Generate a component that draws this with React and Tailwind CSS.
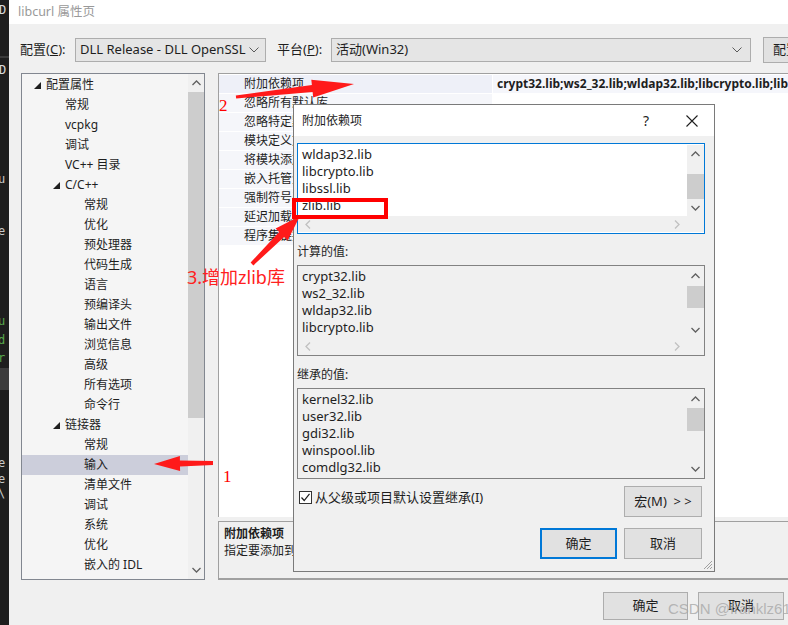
import React from 'react';

const F = "font-['Noto_Sans','Noto_Sans_CJK_SC',sans-serif]";

function Tri() {
  return (
    <svg width="7" height="7" viewBox="0 0 7 7">
      <polygon points="7,0 7,7 0,7" fill="#1e1e1e" />
    </svg>
  );
}

function Chev({ dir, color = '#606060' }) {
  const pts = {
    up: '0.5,5 4.5,1 8.5,5',
    down: '0.5,1 4.5,5 8.5,1',
    left: '5,0.5 1,4.5 5,8.5',
    right: '1,0.5 5,4.5 1,8.5',
  }[dir];
  const vert = dir === 'up' || dir === 'down';
  return (
    <svg width={vert ? 9 : 6} height={vert ? 6 : 9} viewBox={vert ? '0 0 9 6' : '0 0 6 9'}>
      <polyline points={pts} fill="none" stroke={color} strokeWidth="1.3" />
    </svg>
  );
}

function ComboChev() {
  return (
    <svg width="10" height="6" viewBox="0 0 10 6">
      <polyline points="0.5,0.5 5,5 9.5,0.5" fill="none" stroke="#5a5a5a" strokeWidth="1" />
    </svg>
  );
}

const tree = [
  ['配置属性', 0, true],
  ['常规', 1],
  ['vcpkg', 1],
  ['调试', 1],
  ['VC++ 目录', 1],
  ['C/C++', 1, true],
  ['常规', 2],
  ['优化', 2],
  ['预处理器', 2],
  ['代码生成', 2],
  ['语言', 2],
  ['预编译头', 2],
  ['输出文件', 2],
  ['浏览信息', 2],
  ['高级', 2],
  ['所有选项', 2],
  ['命令行', 2],
  ['链接器', 1, true],
  ['常规', 2],
  ['输入', 2, false, true],
  ['清单文件', 2],
  ['调试', 2],
  ['系统', 2],
  ['优化', 2],
  ['嵌入的 IDL', 2],
];

const indent = ['w-[12px]', 'w-[31px]', 'w-[50px]'];

const props = [
  '附加依赖项',
  '忽略所有默认库',
  '忽略特定默认库',
  '模块定义文件',
  '将模块添加到程序集',
  '嵌入托管资源文件',
  '强制符号引用',
  '延迟加载的 DLL',
  '程序集链接资源',
];

function VScroll({ thumbTop, thumbH, height }) {
  return (
    <div className="w-[17px] bg-[#f0f0f0] flex flex-col items-center shrink-0" style={{ height }}>
      <div className="h-[17px] flex items-center justify-center"><Chev dir="up" /></div>
      <div className="flex-1 w-full relative">
        <div className="absolute left-0 right-0 bg-[#cdcdcd]" style={{ top: thumbTop, height: thumbH }} />
      </div>
      <div className="h-[17px] flex items-center justify-center"><Chev dir="down" /></div>
    </div>
  );
}

function ListBox({ items, blue, white, hscroll, thumbTop, thumbH }) {
  const innerH = hscroll ? 72 : 89;
  return (
    <div className={`h-[91px] border ${blue ? 'border-[#0078d7]' : 'border-[#828282]'} ${white ? 'bg-white' : 'bg-[#f0f0f0]'} flex flex-col`}>
      <div className="flex">
        <div className="flex-1 pl-[4px] pt-[2px] overflow-hidden" style={{ height: innerH }}>
          {items.map((t, i) => (
            <div key={i} className="h-[17px] leading-[17px] text-[13px] text-[#1e1e1e] whitespace-nowrap">{t}</div>
          ))}
        </div>
        <div className={`${white ? 'bg-white' : 'bg-[#f0f0f0]'} pt-[1px]`}>
          <VScroll thumbTop={thumbTop} thumbH={thumbH} height={hscroll ? 71 : 87} />
        </div>
      </div>
      {hscroll && (
        <div className="flex h-[16px] bg-[#f0f0f0]">
          <div className="flex-1 flex items-center justify-between px-[7px]">
            <Chev dir="left" color="#c0c0c0" />
            <Chev dir="right" color="#c0c0c0" />
          </div>
          <div className="w-[17px] bg-[#f0f0f0]" />
        </div>
      )}
    </div>
  );
}

function arrowPoly(tx, ty, hx, hy, headLen, headW, tailW, neckW) {
  const dx = hx - tx, dy = hy - ty;
  const len = Math.hypot(dx, dy);
  const ux = dx / len, uy = dy / len;
  const nx = -uy, ny = ux;
  const bx = hx - ux * headLen, by = hy - uy * headLen;
  const p = (x, y) => `${x.toFixed(1)},${y.toFixed(1)}`;
  return [
    p(tx + nx * tailW / 2, ty + ny * tailW / 2),
    p(bx + nx * neckW / 2, by + ny * neckW / 2),
    p(bx + nx * headW / 2, by + ny * headW / 2),
    p(hx, hy),
    p(bx - nx * headW / 2, by - ny * headW / 2),
    p(bx - nx * neckW / 2, by - ny * neckW / 2),
    p(tx - nx * tailW / 2, ty - ny * tailW / 2),
  ].join(' ');
}

export default function App() {
  return (
    <div className={`relative w-[788px] h-[625px] overflow-hidden flex bg-[#f0f0f0] ${F}`}>
      {/* editor strip */}
      <div className="w-[9px] h-full bg-[#1e1e1e] overflow-hidden flex flex-col font-['DejaVu_Sans_Mono',monospace] text-[12px] leading-[14px] text-[#c8c8c8] shrink-0">
        <div className="mt-[3px] -ml-[1px] text-[#dcdcdc]">D</div>
        <div className="mt-[39px] h-[2px] bg-[#3a3a3a]" />
        <div className="mt-[5px] -ml-[1px] text-[#dcdcdc]">D</div>
        <div className="mt-[95px] -ml-[2px]">u</div>
        <div className="mt-[38px] -ml-[2px]">e</div>
        <div className="mt-[76px] -ml-[2px] text-[#57a64a]">u</div>
        <div className="mt-[5px] -ml-[2px] text-[#57a64a]">d</div>
        <div className="mt-[4px] -ml-[2px] text-[#57a64a]">r</div>
        <div className="mt-[3px] h-[22px] bg-[#3c3c3c]" />
        <div className="mt-[66px] -ml-[2px]">e</div>
        <div className="mt-[2px] -ml-[2px]">e</div>
        <div className="mt-[0px] -ml-[2px]">\</div>
      </div>

      {/* window */}
      <div className="flex-1 flex flex-col min-w-0 overflow-hidden">
        <div className="h-[24px] bg-white flex items-center pl-[9px] shrink-0">
          <span className="text-[12.5px] text-[#999999]">libcurl 属性页</span>
        </div>

        {/* config row */}
        <div className="mt-[14px] h-[24px] flex items-center text-[13px] text-[#1e1e1e] shrink-0">
          <span className="ml-[11px] w-[55px] shrink-0 whitespace-nowrap">配置(<u>C</u>):</span>
          <div className="w-[191px] h-[24px] border border-[#adadad] bg-[#e5e5e5] flex items-center pl-[4px] pr-[6px] shrink-0">
            <span className="flex-1 whitespace-nowrap">DLL Release - DLL OpenSSL</span>
            <ComboChev />
          </div>
          <span className="ml-[11px] w-[54px] shrink-0 whitespace-nowrap">平台(<u>P</u>):</span>
          <div className="w-[420px] h-[24px] border border-[#adadad] bg-[#e5e5e5] flex items-center pl-[4px] pr-[8px] shrink-0">
            <span className="flex-1">活动(Win32)</span>
            <ComboChev />
          </div>
          <div className="ml-[12px] w-[60px] h-[26px] border border-[#adadad] bg-[#e1e1e1] flex items-center pl-[9px] shrink-0 whitespace-nowrap">配置管理器</div>
        </div>

        {/* main */}
        <div className="mt-[11px] h-[507px] flex shrink-0">
          {/* tree */}
          <div className="ml-[12px] w-[184px] h-full border border-[#828790] bg-[#f5f5f5] flex shrink-0">
            <div className="flex-1 text-[12px] text-[#1e1e1e] pt-[1px]">
              {tree.map(([t, l, exp, sel], i) => (
                <div key={i} className={`h-[20px] flex items-center ${sel ? 'bg-[#cccedb]' : ''}`}>
                  <div className={`${indent[l]} shrink-0`} />
                  <div className="w-[12px] flex items-center shrink-0">{exp ? <Tri /> : null}</div>
                  <span className="whitespace-nowrap">{t}</span>
                </div>
              ))}
            </div>
            <div className="w-[16px] h-full bg-[#f0f0f0] flex flex-col items-center shrink-0">
              <div className="h-[18px] flex items-center justify-center"><Chev dir="up" /></div>
              <div className="w-full h-[326px] bg-[#cdcdcd]" />
              <div className="flex-1" />
              <div className="h-[18px] flex items-center justify-center"><Chev dir="down" /></div>
            </div>
          </div>

          {/* right */}
          <div className="ml-[13px] w-[600px] flex flex-col shrink-0">
            <div className="h-[444px] border-l border-t border-[#a0a0a0] bg-white text-[12px] text-[#1e1e1e] pt-[1px]">
              {props.map((p, i) => (
                <div key={i} className={`h-[19px] flex border-b border-white ${i === 0 ? 'bg-[#eef0f8]' : ''}`}>
                  <div className={`w-[21px] shrink-0 ${i === 0 ? '' : 'bg-[#f5f6fa]'}`} />
                  <div className={`w-[252px] shrink-0 pl-[4px] flex items-center whitespace-nowrap overflow-hidden ${i === 0 ? '' : 'bg-[#f5f6fa]'}`}>{p}</div>
                  <div className={`flex-1 min-w-0 overflow-hidden pl-[4px] flex items-center whitespace-nowrap border-l border-white ${i === 0 ? 'font-bold bg-[#f5f6fb]' : 'border-b border-[#f0f0f0]'}`}>
                    {i === 0 ? 'crypt32.lib;ws2_32.lib;wldap32.lib;libcrypto.lib;libssl.lib;zlib.lib;%(AdditionalDependencies)' : ''}
                  </div>
                </div>
              ))}
            </div>
            <div className="mt-[4px] h-[59px] border border-b-2 border-[#a0a0a0] bg-[#f0f0f0] pl-[5px] pt-[3px] text-[12px] text-[#1e1e1e]">
              <div className="font-bold h-[17px] leading-[17px]">附加依赖项</div>
              <div className="h-[17px] leading-[17px]">指定要添加到链接命令行的附加项。</div>
            </div>
          </div>
        </div>

        {/* bottom buttons */}
        <div className="mt-[12px] h-[28px] flex text-[13px] text-[#1e1e1e] shrink-0">
          <div className="ml-[594px] w-[85px] h-[28px] border border-[#adadad] bg-[#e1e1e1] flex items-center justify-center shrink-0">确定</div>
          <div className="ml-[10px] w-[86px] h-[28px] border border-[#adadad] bg-[#e1e1e1] flex items-center justify-center shrink-0">取消</div>
        </div>
      </div>

      {/* dialog */}
      <div className="absolute left-[293px] top-[104px] w-[422px] h-[468px] border border-[#7a7a7a] bg-[#f0f0f0] flex flex-col text-[#1e1e1e]">
        <div className="h-[31px] bg-white flex items-center pl-[8px] shrink-0">
          <span className="text-[12px] flex-1">附加依赖项</span>
          <span className="text-[14px] w-[20px] text-center mr-[30px]">?</span>
          <svg width="12" height="12" viewBox="0 0 12 12" className="mr-[16px]">
            <path d="M0.5 0.5 L11.5 11.5 M11.5 0.5 L0.5 11.5" stroke="#1e1e1e" strokeWidth="1.1" />
          </svg>
        </div>
        <div className="pl-[3px] pr-[9px] flex flex-col">
          <div className="mt-[7px]">
            <ListBox items={['wldap32.lib', 'libcrypto.lib', 'libssl.lib', 'zlib.lib']} blue white hscroll thumbTop={12} thumbH={25} />
          </div>
          <div className="h-[31px] flex items-end pb-[6px] text-[12px] leading-[14px]">计算的值:</div>
          <ListBox items={['crypt32.lib', 'ws2_32.lib', 'wldap32.lib', 'libcrypto.lib']} hscroll thumbTop={2} thumbH={22} />
          <div className="h-[32px] flex items-end pb-[6px] text-[12px] leading-[14px]">继承的值:</div>
          <ListBox items={['kernel32.lib', 'user32.lib', 'gdi32.lib', 'winspool.lib', 'comdlg32.lib']} thumbTop={1} thumbH={23} />
          <div className="mt-[7px] h-[31px] flex items-start text-[13px]">
            <div className="mt-[5px] ml-[2px] w-[13px] h-[13px] border border-[#333] bg-white flex items-center justify-center shrink-0">
              <svg width="11" height="11" viewBox="0 0 11 11">
                <polyline points="1.5,5.5 4.2,8.5 9.5,1.8" fill="none" stroke="#1e1e1e" strokeWidth="1.2" />
              </svg>
            </div>
            <span className="ml-[3px] flex-1 mt-[2px] leading-[18px]">从父级或项目默认设置继承(I)</span>
            <div className="mr-[3px] w-[78px] h-[31px] border border-[#adadad] bg-[#e1e1e1] flex items-center justify-center shrink-0 whitespace-pre">宏(M)  &gt; &gt;</div>
          </div>
          <div className="mt-[11px] h-[31px] flex justify-end text-[13px]">
            <div className="w-[77px] h-[31px] border-2 border-[#0078d7] bg-[#e1e1e1] flex items-center justify-center">确定</div>
            <div className="ml-[7px] mr-[3px] w-[78px] h-[31px] border border-[#adadad] bg-[#e1e1e1] flex items-center justify-center">取消</div>
          </div>
        </div>
        <svg width="10" height="10" viewBox="0 0 10 10" className="absolute right-[1px] bottom-[1px]">
          <path d="M9 1 L1 9 M9 4 L4 9 M9 7 L7 9" stroke="#a0a0a0" strokeWidth="1" />
        </svg>
      </div>

      {/* annotations */}
      <svg className="absolute left-0 top-0 pointer-events-none" width="788" height="625" viewBox="0 0 788 625">
        <polygon points={arrowPoly(236, 97, 354, 84, 42, 18, 3, 7)} fill="#ff1a1a" />
        <polygon points={arrowPoly(213, 463, 154, 464, 26, 15, 4, 6)} fill="#ff1a1a" />
        <polygon points={arrowPoly(252, 264, 300, 216, 26, 17, 4, 7)} fill="#ff1a1a" />
        <rect x="294" y="200" width="92" height="17" fill="none" stroke="#ff0000" strokeWidth="4" />
      </svg>
      <span className="absolute left-[219px] top-[96px] text-[17px] leading-[20px] text-[#ff0000] font-['Liberation_Serif',serif]">2</span>
      <span className="absolute left-[223px] top-[467px] text-[17px] leading-[20px] text-[#ff0000] font-['Liberation_Serif',serif]">1</span>
      <span className="absolute left-[187px] top-[265px] text-[18px] leading-[24px] text-[#ff2020] whitespace-nowrap">3.增加zlib库</span>
      <span className="absolute left-[668px] top-[600px] text-[15px] leading-[18px] text-[#a8a8a8]/80 font-['Liberation_Sans',sans-serif] whitespace-nowrap">CSDN @franklz61</span>
    </div>
  );
}
